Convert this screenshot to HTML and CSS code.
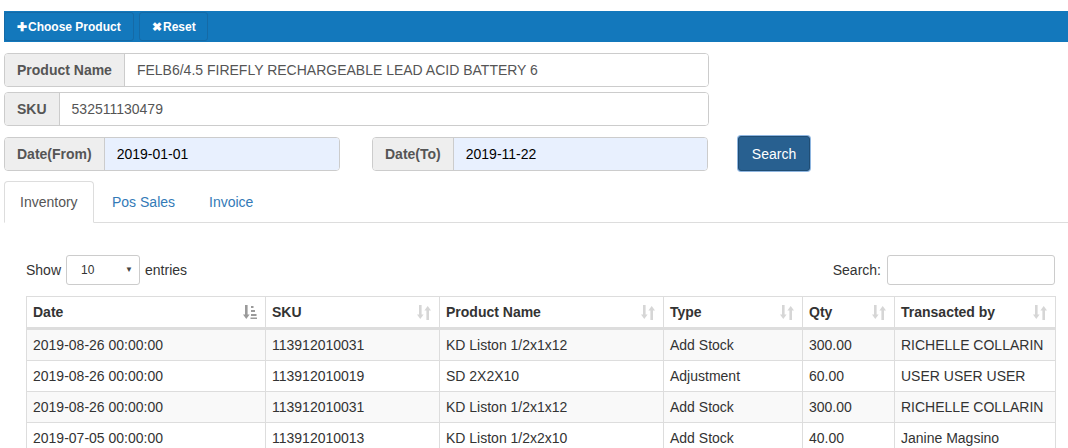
FILE: index.html
```html
<!DOCTYPE html>
<html>
<head>
<meta charset="utf-8">
<link rel="stylesheet" href="styles.css">
</head>
<body>
<div class="topbar">
  <button class="tbtn"><span class="ico">&#10010;</span>Choose Product</button>
  <button class="tbtn"><span class="ico">&#10006;</span>Reset</button>
</div>

<div class="form">
  <div class="igroup">
    <span class="addon">Product Name</span>
    <span class="field">FELB6/4.5 FIREFLY RECHARGEABLE LEAD ACID BATTERY 6</span>
  </div>
  <div class="igroup">
    <span class="addon">SKU</span>
    <span class="field">532511130479</span>
  </div>
  <div class="daterow">
    <div class="igroup date">
      <span class="addon">Date(From)</span>
      <span class="field auto">2019-01-01</span>
    </div>
    <div class="igroup date">
      <span class="addon">Date(To)</span>
      <span class="field auto">2019-11-22</span>
    </div>
    <button class="search-btn">Search</button>
  </div>
</div>

<ul class="tabs">
  <li class="tab active">Inventory</li>
  <li class="tab">Pos Sales</li>
  <li class="tab">Invoice</li>
</ul>

<div class="tabpane">
  <div class="dt-top">
    <div class="length">Show <span class="select"><span>10</span><span class="caret">&#9660;</span></span> entries</div>
    <div class="filter">Search: <span class="sinput"></span></div>
  </div>
  <table class="dt">
    <colgroup>
      <col style="width:239px"><col style="width:174px"><col style="width:224px"><col style="width:139px"><col style="width:92px"><col style="width:161px">
    </colgroup>
    <thead>
      <tr>
        <th><div class="th">Date<svg class="sort on" width="14" height="15" viewBox="0 0 14 15"><rect x="2" y="0" width="2.6" height="10"/><polygon points="0,9.5 6.6,9.5 3.3,14"/><rect x="8" y="1" width="2.5" height="2"/><rect x="8" y="5" width="4" height="2"/><rect x="8" y="9" width="5.5" height="2"/><rect x="7.5" y="12.5" width="6.5" height="1.5"/></svg></div></th>
        <th><div class="th">SKU<svg class="sort" width="14" height="15" viewBox="0 0 14 15"><rect x="2" y="0" width="2.6" height="10"/><polygon points="0,9.5 6.6,9.5 3.3,14"/><rect x="9.4" y="5" width="2.6" height="10"/><polygon points="7.4,5.5 14,5.5 10.7,1"/></svg></div></th>
        <th><div class="th">Product Name<svg class="sort" width="14" height="15" viewBox="0 0 14 15"><rect x="2" y="0" width="2.6" height="10"/><polygon points="0,9.5 6.6,9.5 3.3,14"/><rect x="9.4" y="5" width="2.6" height="10"/><polygon points="7.4,5.5 14,5.5 10.7,1"/></svg></div></th>
        <th><div class="th">Type<svg class="sort" width="14" height="15" viewBox="0 0 14 15"><rect x="2" y="0" width="2.6" height="10"/><polygon points="0,9.5 6.6,9.5 3.3,14"/><rect x="9.4" y="5" width="2.6" height="10"/><polygon points="7.4,5.5 14,5.5 10.7,1"/></svg></div></th>
        <th><div class="th">Qty<svg class="sort" width="14" height="15" viewBox="0 0 14 15"><rect x="2" y="0" width="2.6" height="10"/><polygon points="0,9.5 6.6,9.5 3.3,14"/><rect x="9.4" y="5" width="2.6" height="10"/><polygon points="7.4,5.5 14,5.5 10.7,1"/></svg></div></th>
        <th><div class="th">Transacted by<svg class="sort" width="14" height="15" viewBox="0 0 14 15"><rect x="2" y="0" width="2.6" height="10"/><polygon points="0,9.5 6.6,9.5 3.3,14"/><rect x="9.4" y="5" width="2.6" height="10"/><polygon points="7.4,5.5 14,5.5 10.7,1"/></svg></div></th>
      </tr>
    </thead>
    <tbody>
      <tr><td>2019-08-26 00:00:00</td><td>113912010031</td><td>KD Liston 1/2x1x12</td><td>Add Stock</td><td>300.00</td><td>RICHELLE COLLARIN</td></tr>
      <tr><td>2019-08-26 00:00:00</td><td>113912010019</td><td>SD 2X2X10</td><td>Adjustment</td><td>60.00</td><td>USER USER USER</td></tr>
      <tr><td>2019-08-26 00:00:00</td><td>113912010031</td><td>KD Liston 1/2x1x12</td><td>Add Stock</td><td>300.00</td><td>RICHELLE COLLARIN</td></tr>
      <tr><td>2019-07-05 00:00:00</td><td>113912010013</td><td>KD Liston 1/2x2x10</td><td>Add Stock</td><td>40.00</td><td>Janine Magsino</td></tr>
    </tbody>
  </table>
</div>
</body>
</html>
```

FILE: styles.css
```css
* { box-sizing: border-box; }
html, body { margin: 0; background: #fff; }
body {
  padding: 11px 0 0 4px;
  font-family: "Liberation Sans", Arial, sans-serif;
  font-size: 14px;
  line-height: 20px;
  color: #333;
  overflow: hidden;
}
.topbar {
  height: 31px;
  background: #1378bc;
  display: flex;
  align-items: center;
  gap: 5px;
}
.tbtn {
  height: 29px;
  background: #1378bc;
  border: 1px solid #156aa6;
  border-radius: 3px;
  color: #fff;
  font-family: "Liberation Sans", Arial, sans-serif;
  font-weight: bold;
  font-size: 12px;
  padding: 0 12px;
  display: flex;
  align-items: center;
}
.tbtn:first-child { width: 130px; }
.tbtn:nth-child(2) { width: 69px; }
.ico { font-size: 12px; margin-right: 1px; }
.form {
  margin-top: 11px;
  width: 705px;
  display: flex;
  flex-direction: column;
}
.igroup {
  display: flex;
  height: 34px;
  border: 1px solid #ccc;
  border-radius: 4px;
  overflow: hidden;
  margin-bottom: 5px;
  flex-shrink: 0;
}
.addon {
  background: #eee;
  color: #555;
  font-weight: bold;
  padding: 6px 12px;
  border-right: 1px solid #ccc;
  display: flex;
  align-items: center;
}
.field {
  flex: 1;
  padding: 6px 12px;
  color: #555;
  display: flex;
  align-items: center;
  background: #fff;
}
.field.auto { background: #e8f0fe; color: #000; }
.daterow {
  display: flex;
  align-items: center;
  margin-top: 5px;
  width: max-content;
}
.igroup.date { width: 336px; margin-bottom: 0; }
.igroup.date + .igroup.date { margin-left: 32px; }
.search-btn {
  margin-left: 30px;
  width: 72px;
  height: 35px;
  flex-shrink: 0;
  background: #286090;
  border: 1px solid #204d74;
  border-radius: 3px;
  color: #fff;
  font-family: "Liberation Sans", Arial, sans-serif;
  font-size: 14px;
  box-shadow: 0 0 0 1px #8fb6e0;
}
.tabs {
  list-style: none;
  margin: 10px 0 0 0;
  padding: 0;
  display: flex;
  border-bottom: 1px solid #ddd;
  height: 42px;
}
.tab {
  padding: 10px 15px;
  margin-right: 2px;
  color: #337ab7;
  border: 1px solid transparent;
  border-radius: 4px 4px 0 0;
  height: 42px;
}
.tab.active {
  color: #555;
  border-color: #ddd;
  border-bottom-color: #fff;
  background: #fff;
  width: 90px;
}
.tabpane {
  padding: 32px 13px 0 22px;
}
.dt-top {
  display: flex;
  justify-content: space-between;
  align-items: center;
  height: 30px;
}
.length, .filter { display: flex; align-items: center; }
.select {
  width: 74px;
  height: 30px;
  margin: 0 5px 0 5px;
  border: 1px solid #ccc;
  border-radius: 3px;
  display: flex;
  align-items: center;
  justify-content: space-between;
  padding: 0 6px 0 14px;
  font-size: 12px;
  color: #333;
}
.caret { font-size: 8px; color: #444; }
.sinput {
  width: 168px;
  height: 30px;
  margin-left: 6px;
  border: 1px solid #ccc;
  border-radius: 3px;
}
.dt {
  margin-top: 11px;
  width: 1029px;
  border-collapse: collapse;
  table-layout: fixed;
}
.dt th, .dt td {
  border: 1px solid #ddd;
  text-align: left;
  white-space: nowrap;
  overflow: hidden;
}
.dt th {
  font-weight: bold;
  padding: 5px 6px 5px 6px;
  border-bottom: 3px solid #ddd;
}
.th {
  display: flex;
  justify-content: space-between;
  align-items: center;
}
.sort { fill: #d6d6d6; margin-right: 2px; }
.sort.on { fill: #9a9a9a; }
.dt td {
  padding: 5px 6px;
  height: 31px;
}
.dt tbody tr:nth-child(odd) td { background: #f9f9f9; }
```
